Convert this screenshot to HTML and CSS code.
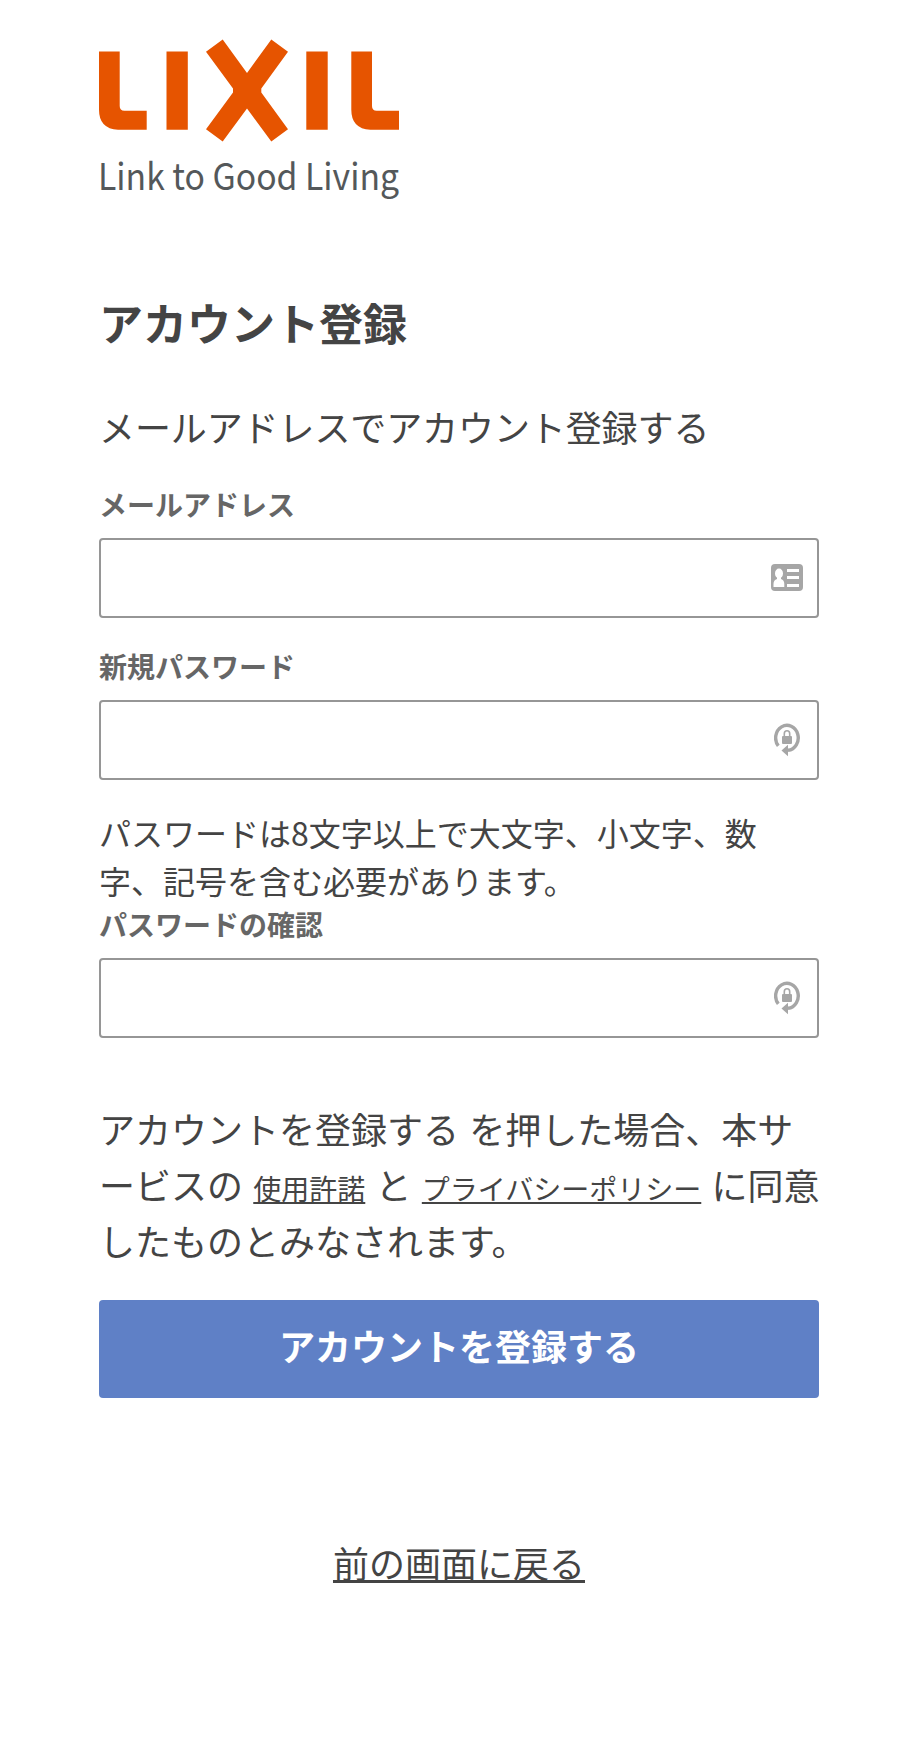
FILE: index.html
```
<!DOCTYPE html>
<html lang="ja">
<head>
    <meta charset="UTF-8">
    <meta name="viewport" content="width=device-width, initial-scale=1.0">
    <title>アカウント登録</title>
    <link rel="stylesheet" href="styles.css">
</head>
<body>

<div class="container">
    <svg class="logo" width="310" height="190" viewBox="0 0 310 190" role="img" aria-label="LIXIL">
        <g fill="#e65400">
            <path d="M0 21.5h20.7v54.5q0 4.7 4.7 4.7h22.3v19H19q-19-1-19-20z"/>
            <path d="M67.5 21.5h21.3v78.2H67.5z"/>
            <path d="M107 21.7l16.7-12.2L148 43l24.3-33.5L189 21.7l-26.7 36.8v4L189 99.3l-16.7 12.2L148 78.5l-24.3 33L107 99.3l27-36.8v-4z"/>
            <path d="M207.3 21.5h21.4v78.2h-21.4z"/>
            <path d="M252.3 21.5H273v54.5q0 4.7 4.7 4.7H300v19h-28.7q-19-1-19-20z"/>
        </g>
        <text class="tagline" x="-1" y="159.5" textLength="301" lengthAdjust="spacingAndGlyphs">Link to Good Living</text>
    </svg>

    <h1>アカウント登録</h1>
    <h2>メールアドレスでアカウント登録する</h2>

    <form>
        <label for="email">メールアドレス</label>
        <div class="field">
            <input type="email" id="email">
            <svg class="icon" width="32" height="28" viewBox="0 0 32 28">
                <rect width="32" height="27" rx="4" fill="#a6a6a6"/>
                <g fill="#fff">
                    <ellipse cx="8" cy="9.5" rx="4" ry="5"/>
                    <path d="M6 13h4v2q3.3 1 3.3 5v3H2.5v-3q0-4 3.5-5z"/>
                    <path d="M16 5h12v3H16zM16 12h12v3H16zM16 20h12v3H16z"/>
                </g>
            </svg>
        </div>

        <label for="password">新規パスワード</label>
        <div class="field">
            <input type="password" id="password">
            <svg class="icon icon-lock" width="26" height="34" viewBox="0 0 26 34">
                <path d="M4.3 22.9A11.3 12.5 0 1 1 14 27.3" fill="none" stroke="#a6a6a6" stroke-width="3.4"/>
                <path d="M7.5 27.5l6.5-5.8v11.6z" fill="#a6a6a6"/>
                <rect x="8" y="13" width="10" height="8" rx="1" fill="#a6a6a6"/>
                <path d="M10.3 13.5v-2.8a2.7 2.9 0 0 1 5.4 0v2.8" fill="none" stroke="#a6a6a6" stroke-width="1.6"/>
            </svg>
        </div>
        <p class="hint">パスワードは8文字以上で大文字、小文字、数<br>字、記号を含む必要があります。</p>

        <label for="confirm">パスワードの確認</label>
        <div class="field">
            <input type="password" id="confirm">
            <svg class="icon icon-lock" width="26" height="34" viewBox="0 0 26 34">
                <path d="M4.3 22.9A11.3 12.5 0 1 1 14 27.3" fill="none" stroke="#a6a6a6" stroke-width="3.4"/>
                <path d="M7.5 27.5l6.5-5.8v11.6z" fill="#a6a6a6"/>
                <rect x="8" y="13" width="10" height="8" rx="1" fill="#a6a6a6"/>
                <path d="M10.3 13.5v-2.8a2.7 2.9 0 0 1 5.4 0v2.8" fill="none" stroke="#a6a6a6" stroke-width="1.6"/>
            </svg>
        </div>

        <p class="terms">アカウントを登録する を押した場合、本サ<br>ービスの <a href="#">使用許諾</a> と <a href="#">プライバシーポリシー</a> に同意<br>したものとみなされます。</p>

        <button type="submit">アカウントを登録する</button>
    </form>

    <p class="back"><a href="#">前の画面に戻る</a></p>
</div>

</body>
</html>
```
FILE: styles.css
```
body {
    font-family: "Noto Sans CJK JP", sans-serif;
    background-color: #fff;
    color: #444;
    margin: 0;
}

.container {
    width: 720px;
    margin: 0 99px;
    padding-top: 30px;
}

.logo {
    display: block;
    overflow: visible;
}

.tagline {
    font-size: 37px;
    fill: #54585a;
}

h1 {
    font-size: 44px;
    line-height: 60px;
    margin: 72px 0 0;
}

h2 {
    font-size: 36px;
    font-weight: normal;
    line-height: 54px;
    letter-spacing: -0.1px;
    margin: 47px 0 0;
}

form {
    margin-top: 31px;
}

label {
    display: block;
    font-size: 28px;
    font-weight: bold;
    line-height: 40px;
    color: #666;
}

.field {
    position: relative;
    margin: 14px 0 28px;
}

input {
    display: block;
    width: 100%;
    height: 80px;
    box-sizing: border-box;
    border: 2px solid #969696;
    border-radius: 4px;
    padding: 0 60px 0 16px;
    font-size: 32px;
    background-color: #fff;
}

.icon {
    position: absolute;
    top: 26px;
    right: 16px;
}

.icon-lock {
    top: 23px;
    right: 19px;
}

.hint {
    font-size: 32px;
    line-height: 48px;
    margin: 0;
    white-space: nowrap;
}

.terms {
    font-size: 36px;
    line-height: 56px;
    word-spacing: 2.2px;
    margin: 62px 0 32px;
    white-space: nowrap;
}

.terms a {
    font-size: 28px;
    line-height: 1;
}

a {
    color: #444;
    text-decoration: underline;
}

button {
    display: block;
    width: 100%;
    height: 98px;
    border: 0;
    border-radius: 4px;
    padding: 0 0 8px;
    background-color: #5f80c6;
    color: #fff;
    font-family: inherit;
    font-size: 36px;
    font-weight: bold;
    cursor: pointer;
}

.back {
    font-size: 36px;
    line-height: 54px;
    margin: 137px 0 0;
    text-align: center;
}
```
